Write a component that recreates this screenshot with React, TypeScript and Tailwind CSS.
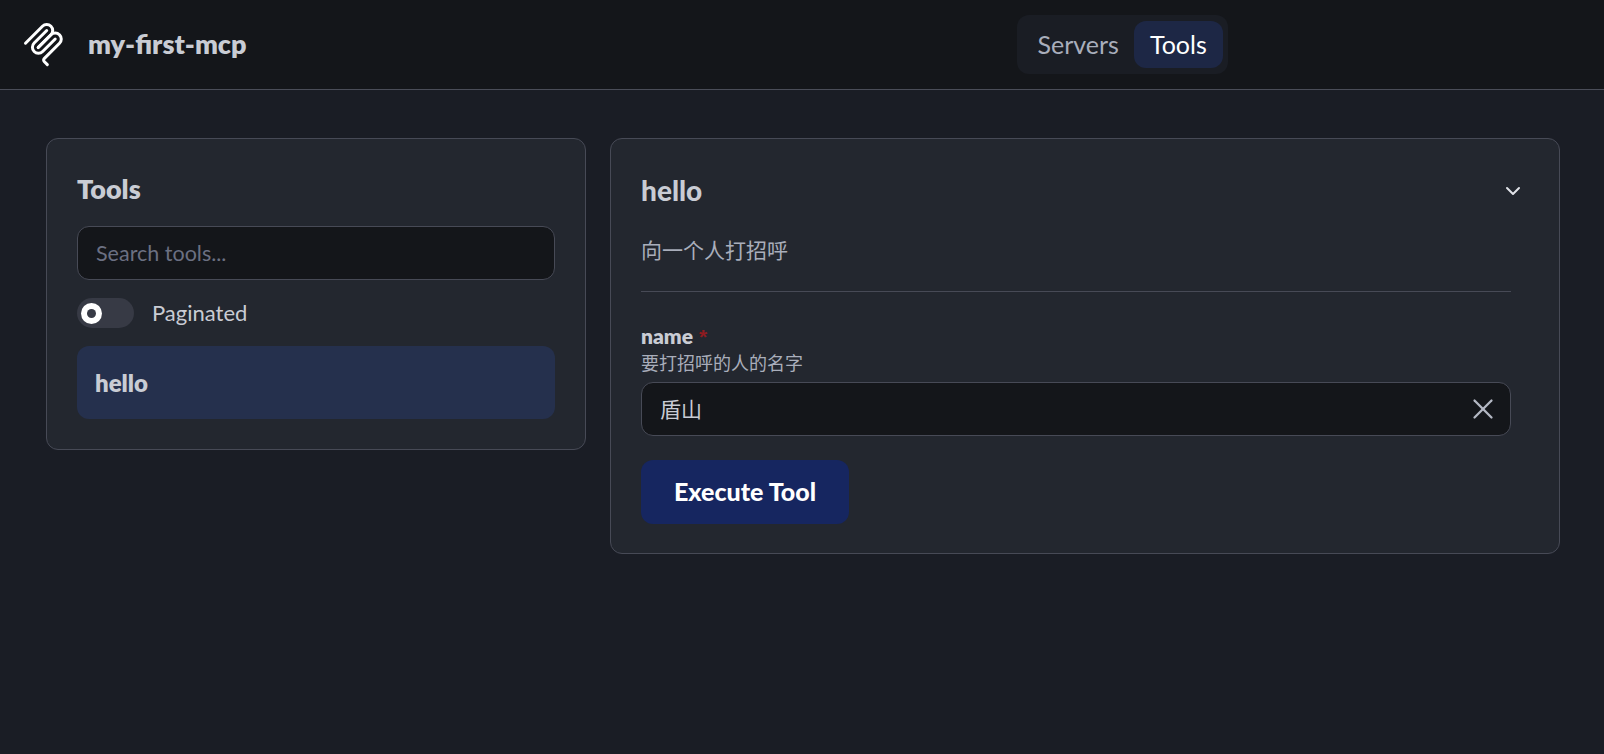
import { ChevronDown, X } from "lucide-react";

function McpLogo() {
  return (
    <svg viewBox="0 0 180 180" fill="none" stroke="white" strokeWidth="12" strokeLinecap="round" className="h-[45px] w-[45px] shrink-0">
      <path d="M18 84.8528L85.8822 16.9706C95.2548 7.59798 110.451 7.59798 119.823 16.9706C129.196 26.3431 129.196 41.5391 119.823 50.9117L68.5581 102.177" />
      <path d="M69.2652 101.47L119.823 50.9117C129.196 41.5391 144.392 41.5391 153.765 50.9117L154.118 51.2652C163.491 60.6378 163.491 75.8338 154.118 85.2063L92.7248 146.6C89.6006 149.724 89.6006 154.789 92.7248 157.913L105.331 170.52" />
      <path d="M102.853 33.9411L52.6482 84.1457C43.2756 93.5183 43.2756 108.714 52.6482 118.087C62.0208 127.459 77.2167 127.459 86.5893 118.087L136.794 67.8822" />
    </svg>
  );
}

export default function App() {
  return (
    <div className="min-h-[754px] bg-[#1a1d25] font-['Lato','Noto_Sans_CJK_SC',sans-serif] text-[#c9ccd4]">
      {/* Header */}
      <header className="flex h-[90px] items-center border-b border-[#4a4d58] bg-[#14161a] pl-[21px]">
        <McpLogo />
        <span className="ml-[22px] text-[27px] font-extrabold">my-first-mcp</span>
        <nav className="ml-[770px] flex h-[59px] items-center rounded-xl bg-[#1a1d24] pr-[5px] pl-[6px]">
          <span className="px-[15px] text-[25px] text-[#a9aebb]">Servers</span>
          <span className="flex h-[47px] items-center rounded-xl bg-[#1d2745] px-[16px] text-[25px] text-white">Tools</span>
        </nav>
      </header>

      {/* Body */}
      <main className="flex items-start gap-6 pt-[48px] pl-[46px]">
        <section className="w-[540px] rounded-xl border border-[#474a56] bg-[#23272f] px-[30px] pt-[32px] pb-[30px]">
          <h2 className="text-[27px] leading-9 font-extrabold">Tools</h2>
          <input
            placeholder="Search tools..."
            className="mt-[19px] h-[54px] w-full rounded-xl border border-[#474a56] bg-[#14161a] px-[18px] text-[21.5px] outline-none placeholder:text-[#6b7082]"
          />
          <div className="mt-[18px] flex h-[30px] items-center gap-[18px]">
            <div className="flex h-[30px] w-[57px] items-center rounded-full bg-[#373a45] pl-1">
              <div className="flex h-[21px] w-[21px] items-center justify-center rounded-full bg-white">
                <div className="h-[9px] w-[9px] rounded-full bg-[#373a45]" />
              </div>
            </div>
            <span className="text-[22px] leading-[30px]">Paginated</span>
          </div>
          <div className="mt-[18px] flex h-[73px] items-center rounded-xl bg-[#25304d] px-[18px] text-[24px] font-extrabold">hello</div>
        </section>

        <section className="w-[950px] rounded-xl border border-[#474a56] bg-[#23272f] px-[30px] pt-[32px] pb-[29px]">
          <div className="flex h-10 items-center justify-between pr-[4px]">
            <h2 className="pb-[2px] text-[28px] leading-[38px] font-black">hello</h2>
            <ChevronDown className="h-[24px] w-[24px] text-[#e0e2e8]" />
          </div>
          <p className="mt-[25px] w-[870px] border-b border-[#474a56] pb-[27px] text-[21px] leading-7 text-[#a9aebb]">向一个人打招呼</p>
          <div className="mt-[31px] h-[26px] text-[21px] leading-[26px] font-extrabold">
            name <span className="ml-[1px] font-['Liberation_Sans'] text-[21px] font-bold text-[#8f1b20]">*</span>
          </div>
          <div className="text-[18px] leading-[28px] text-[#a9aebb]">要打招呼的人的名字</div>
          <div className="mt-[5px] flex h-[54px] w-[870px] items-center justify-between rounded-xl border border-[#474a56] bg-[#14161a] pr-[10px] pl-[18px]">
            <span className="text-[21px]">盾山</span>
            <X className="h-[34px] w-[34px] text-[#b4b8c4]" strokeWidth={1.6} />
          </div>
          <button className="mt-[24px] h-[64px] w-[208px] rounded-xl bg-[#162660] text-[25px] font-black text-white">Execute Tool</button>
        </section>
      </main>
    </div>
  );
}
